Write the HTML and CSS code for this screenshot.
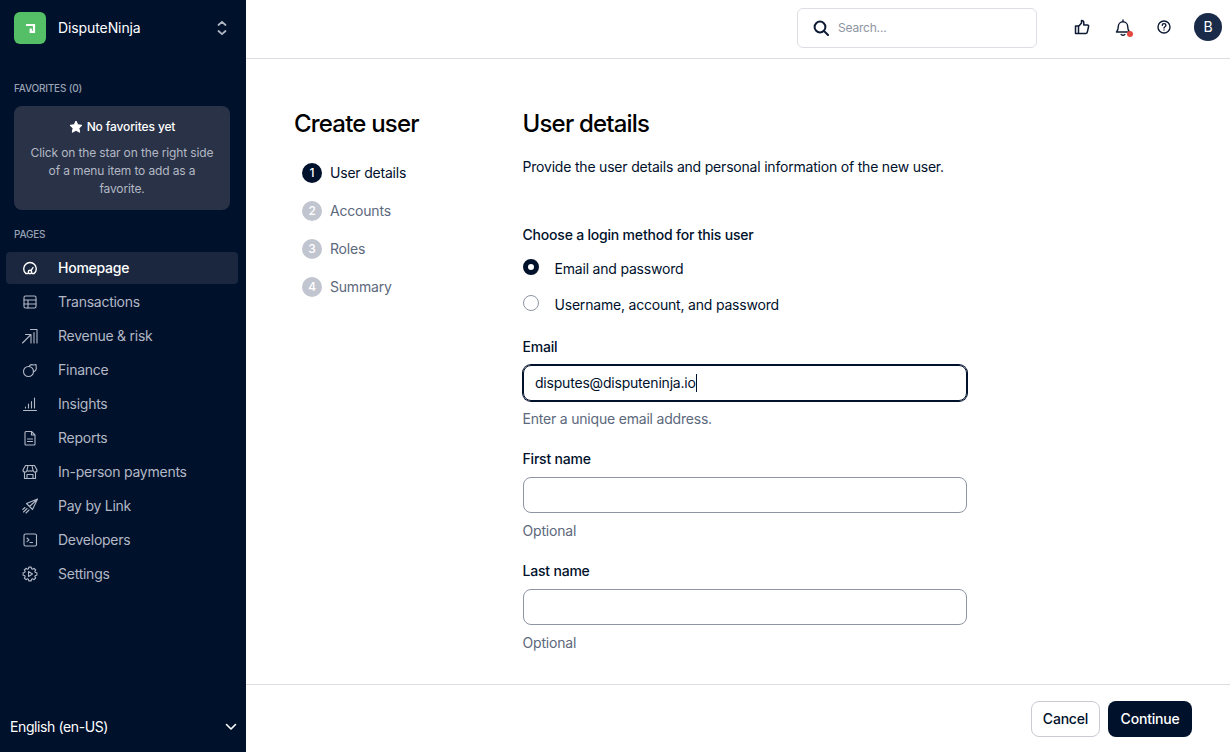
FILE: index.html
```html
<!DOCTYPE html>
<html lang="en">
<head>
  <meta charset="UTF-8">
  <meta name="viewport" content="width=device-width, initial-scale=1.0">
  <title>Create user</title>
  <link rel="stylesheet" href="styles.css">
</head>
<body>
  <aside class="sidebar">
    <div class="brand">
      <div class="brand-logo">
        <svg width="11" height="11" viewBox="0 0 12 12"><path fill="#fff" fill-rule="evenodd" d="M1 1h10v10H5V6h2.500v2.500H8.600V3.400H1z"/></svg>
      </div>
      <span class="brand-name">DisputeNinja</span>
      <svg class="brand-switch" width="12" height="16" viewBox="0 0 12 16" fill="none" stroke="#aeb4c0" stroke-width="1.800" stroke-linecap="round" stroke-linejoin="round"><path d="M2.500 5L6 1.800 9.500 5M2.500 11L6 14.200 9.500 11"/></svg>
    </div>

    <div class="side-label">FAVORITES (0)</div>
    <div class="fav-card">
      <div class="fav-title">
        <svg width="14" height="14" viewBox="0 0 14 14"><path fill="#fff" stroke="#fff" stroke-linejoin="round" d="M7 1l1.800 3.800 4.200.5-3.100 2.900.8 4.100L7 10.300l-3.700 2 .8-4.100L1 5.300l4.200-.5z"/></svg>
        No favorites yet
      </div>
      <p>Click on the star on the right side of a menu item to add as a favorite.</p>
    </div>

    <div class="side-label pages-label">PAGES</div>
    <nav class="side-nav">
      <a class="nav-item active" href="#">
        <svg viewBox="0 0 16 16"><path d="M3.800 13.500A6.300 6.300 0 1 1 12.200 13.500M3.800 13.500H6M10 13.500h2.200"/><circle cx="8" cy="12" r="1.700"/><path d="M9 10.700L11 7.500"/></svg>
        Homepage
      </a>
      <a class="nav-item" href="#">
        <svg viewBox="0 0 16 16"><rect x="2" y="2" width="12" height="12" rx="1.500"/><path d="M2 6h12M2 10h12M6 6v8"/></svg>
        Transactions
      </a>
      <a class="nav-item" href="#">
        <svg viewBox="0 0 16 16"><path d="M.5 15L8.500 7M3.500 6.500h5.500V12M8.500 1.500h6.500v13.500M12 4.500V15M9 10v5"/></svg>
        Revenue &amp; risk
      </a>
      <a class="nav-item" href="#">
        <svg viewBox="0 0 16 16"><circle cx="6.500" cy="9.500" r="5"/><path d="M7 4.500A3.600 3.600 0 0 1 11.500 3l2.500-.5.2 2.600a3.600 3.600 0 0 1-3 4.600"/></svg>
        Finance
      </a>
      <a class="nav-item" href="#">
        <svg viewBox="0 0 16 16"><path d="M1.500 14.500h13M3.500 12v-1M6.500 12V8M9.500 12V5.500M12.500 12V2"/></svg>
        Insights
      </a>
      <a class="nav-item" href="#">
        <svg viewBox="0 0 16 16"><path d="M3 2.500A1 1 0 0 1 4 1.500h5.500L13 5v9a1 1 0 0 1-1 1H4a1 1 0 0 1-1-1zM9.500 1.500V5H13M5.500 9h5M5.500 11.500h5"/></svg>
        Reports
      </a>
      <a class="nav-item" href="#">
        <svg viewBox="0 0 16 16"><path d="M3.500 1.500h9L15 6a2 2 0 0 1-4 .3 2.600 2.600 0 0 1-3 .5 2.600 2.600 0 0 1-3-.5A2 2 0 0 1 1 6zM6 1.500L5 6.300M10 1.500L11 6.300M2.500 8v6.500h11V8M5 14.500V10.500h6v4"/></svg>
        In-person payments
      </a>
      <a class="nav-item" href="#">
        <svg viewBox="0 0 16 16"><path d="M15.500 1L4.500 5.500l3 3 3 3zM15.500 1L7.500 8.500M5 10.500L1.500 14M7 12l-3 3M3 9.500L.8 11.500"/></svg>
        Pay by Link
      </a>
      <a class="nav-item" href="#">
        <svg viewBox="0 0 16 16"><rect x="2" y="2" width="12.500" height="12" rx="1.500"/><path d="M5 6l2 1.800-2 1.800M8 10.500h2.500"/></svg>
        Developers
      </a>
      <a class="nav-item" href="#">
        <svg viewBox="0 0 16 16"><path d="M6.800 1.100H9.200L9.500 2.700 10.670 3.200 12 2.300 13.700 4 12.800 5.330 13.300 6.500 14.900 6.800V9.200L13.300 9.500 12.800 10.670 13.700 12 12 13.700 10.670 12.800 9.500 13.300 9.200 14.900H6.800L6.500 13.300 5.330 12.800 4 13.700 2.300 12 3.200 10.670 2.700 9.500 1.100 9.200V6.800L2.700 6.500 3.200 5.330 2.300 4 4 2.300 5.330 3.200 6.500 2.700z"/><path d="M6.500 5.500l4 2.500-4 2.500z"/></svg>
        Settings
      </a>
    </nav>

    <div class="lang">
      <span>English (en-US)</span>
      <svg width="12" height="8" viewBox="0 0 12 8" fill="none" stroke="#fff" stroke-width="1.600" stroke-linecap="round" stroke-linejoin="round"><path d="M1.500 1.500L6 6l4.500-4.500"/></svg>
    </div>
  </aside>

  <div class="page">
    <header class="topbar">
      <div class="search">
        <svg width="16" height="16" viewBox="0 0 16 16" fill="none" stroke="#0c1a33" stroke-width="2" stroke-linecap="round"><circle cx="7" cy="7" r="5.400"/><path d="M11 11l4 4"/></svg>
        <span>Search...</span>
      </div>
      <div class="top-icons">
        <svg width="16" height="16" viewBox="0 0 16 16" fill="none" stroke="#0c1a33" stroke-width="1.500" stroke-linejoin="round"><path d="M1.500 7h3v7.500h-3zM4.500 7.500L7.500 4V1.500c1.500 0 2.300 1 2.300 2.200V6h3.700c.8 0 1.300.7 1.100 1.500l-1.300 5.700c-.2.800-.8 1.300-1.600 1.300H4.500"/></svg>
        <span class="bell">
          <svg width="16" height="17" viewBox="0 0 16 17" fill="none" stroke="#0c1a33" stroke-width="1.400" stroke-linecap="round" stroke-linejoin="round"><path d="M1.500 13h13c-1.300-1.300-1.800-2.600-1.800-5.500a4.700 4.700 0 0 0-9.400 0c0 2.900-.5 4.200-1.800 5.500zM6.200 15.500c.9.700 2.700.7 3.600 0M8 1v1"/></svg>
          <i class="bell-dot"></i>
        </span>
        <svg width="14" height="14" viewBox="0 0 14 14" fill="none" stroke="#0c1a33" stroke-width="1.400" stroke-linecap="round"><circle cx="7" cy="7" r="6"/><path d="M5.200 5.400C5.300 3 8.900 3.200 8.900 5.300c0 1.400-1.900 1.500-1.900 2.800"/><path d="M7 10v.1"/></svg>
        <div class="avatar">B</div>
      </div>
    </header>

    <main class="content">
      <section class="steps">
        <h1>Create user</h1>
        <ol>
          <li class="current"><span class="num">1</span>User details</li>
          <li><span class="num">2</span>Accounts</li>
          <li><span class="num">3</span>Roles</li>
          <li><span class="num">4</span>Summary</li>
        </ol>
      </section>

      <section class="details">
        <h1>User details</h1>
        <p class="intro">Provide the user details and personal information of the new user.</p>

        <div class="label method-label">Choose a login method for this user</div>
        <div class="radio-row"><span class="radio checked"></span>Email and password</div>
        <div class="radio-row"><span class="radio"></span>Username, account, and password</div>

        <div class="field email-field">
          <div class="label">Email</div>
          <div class="input focused">disputes@disputeninja.io<i class="caret"></i></div>
          <div class="hint">Enter a unique email address.</div>
        </div>
        <div class="field">
          <div class="label">First name</div>
          <div class="input"></div>
          <div class="hint">Optional</div>
        </div>
        <div class="field">
          <div class="label">Last name</div>
          <div class="input"></div>
          <div class="hint">Optional</div>
        </div>
      </section>
    </main>

    <footer class="actions">
      <button class="btn">Cancel</button>
      <button class="btn primary">Continue</button>
    </footer>
  </div>
</body>
</html>
```

FILE: styles.css
```css
/* General */
* {
  box-sizing: border-box;
}

html, body {
  height: 100%;
}

body {
  margin: 0;
  display: flex;
  height: 752px;
  overflow: hidden;
  font-family: "Inter", "Noto Sans", sans-serif;
  font-size: 14px;
  line-height: 20px;
  letter-spacing: -0.2px;
  color: #00112c;
  background-color: #fff;
}

/* Sidebar */
.sidebar {
  width: 246px;
  flex-shrink: 0;
  display: flex;
  flex-direction: column;
  background-color: #00112c;
  color: #fff;
}

.brand {
  display: flex;
  align-items: center;
  height: 56px;
  padding: 0 18px 0 14px;
}

.brand-logo {
  width: 32px;
  height: 32px;
  margin-right: 12px;
  display: flex;
  align-items: center;
  justify-content: center;
  border-radius: 6px;
  background-color: #54bf66;
}

.brand-name {
  flex: 1;
  letter-spacing: -0.1px;
}

.side-label {
  margin: 24px 14px 8px;
  font-size: 10px;
  line-height: 16px;
  font-weight: 500;
  color: #99a2b3;
}

.fav-card {
  margin: 2px 16px 0 14px;
  height: 104px;
  padding: 12px 14px;
  border-radius: 8px;
  background-color: #293247;
  text-align: center;
  font-size: 12px;
  line-height: 18px;
  letter-spacing: -0.13px;
}

.fav-title {
  display: flex;
  align-items: center;
  justify-content: center;
  gap: 4px;
  font-weight: 500;
}

.fav-card p {
  margin: 8px 0 0;
  color: #b3b8c4;
}

.pages-label {
  margin-top: 16px;
  margin-bottom: 0;
}

.side-nav {
  display: flex;
  flex-direction: column;
  gap: 2px;
  margin: 10px 8px 0 6px;
  letter-spacing: -0.25px;
}

.nav-item {
  display: flex;
  align-items: center;
  height: 32px;
  padding-left: 16px;
  border-radius: 4px;
  color: #b3b8c4;
  text-decoration: none;
}

.nav-item svg {
  width: 16px;
  height: 16px;
  margin-right: 20px;
  fill: none;
  stroke: #b3b8c4;
  stroke-width: 1.100;
  stroke-linecap: round;
  stroke-linejoin: round;
}

.nav-item.active {
  background-color: #1a273f;
  color: #fff;
  font-weight: 500;
}

.nav-item.active svg {
  stroke: #fff;
  stroke-width: 1.400;
}

.lang {
  margin-top: auto;
  height: 50px;
  padding: 0 9px 0 10px;
  display: flex;
  align-items: center;
  justify-content: space-between;
  letter-spacing: -0.4px;
}

/* Top bar */
.page {
  flex: 1;
  display: flex;
  flex-direction: column;
  min-width: 0;
}

.topbar {
  height: 59px;
  flex-shrink: 0;
  display: flex;
  align-items: center;
  padding: 0 8px 4px 551px;
  border-bottom: 1px solid #dbdee2;
}

.search {
  width: 240px;
  height: 40px;
  flex-shrink: 0;
  margin-top: 2px;
  padding: 0 15px;
  display: flex;
  align-items: center;
  gap: 9px;
  border: 1px solid #dbdee2;
  border-radius: 6px;
  font-size: 12px;
  color: #8d95a3;
}

.top-icons {
  display: flex;
  align-items: center;
  margin-left: 37px;
}

.top-icons > svg:first-child {
  margin-right: 25px;
}

.bell {
  position: relative;
  display: flex;
  margin-right: 26px;
}

.bell-dot {
  position: absolute;
  right: -2px;
  bottom: -1px;
  width: 6px;
  height: 6px;
  border-radius: 50%;
  background-color: #e5483e;
}

.avatar {
  width: 28px;
  height: 28px;
  margin-left: 23px;
  display: flex;
  align-items: center;
  justify-content: center;
  border-radius: 50%;
  background-color: #1a2b49;
  color: #fff;
  font-size: 14px;
}

/* Content */
.content {
  flex: 1;
  display: flex;
  padding: 50px 0 0 48px;
  overflow: hidden;
}

.steps {
  width: 228.500px;
}

h1 {
  margin: 0;
  font-size: 24px;
  line-height: 30px;
  font-weight: 500;
  letter-spacing: -0.8px;
  color: #000;
}

.steps ol {
  list-style: none;
  margin: 24px 0 0 8px;
  padding: 0;
  display: flex;
  flex-direction: column;
  gap: 18px;
  color: #5c687c;
}

.steps li {
  display: flex;
  align-items: center;
  height: 20px;
}

.num {
  width: 20px;
  height: 20px;
  margin-right: 8px;
  display: flex;
  align-items: center;
  justify-content: center;
  border-radius: 50%;
  background-color: #c1c5cf;
  color: #fff;
  font-size: 12px;
  font-weight: 500;
}

.steps li.current {
  color: #00112c;
}

.current .num {
  background-color: #00112c;
}

.details {
  width: 444.500px;
}

.intro {
  margin: 18px 0 0;
}

.label {
  font-weight: 500;
}

.method-label {
  margin-top: 48px;
}

.radio-row {
  display: flex;
  align-items: center;
  height: 20px;
  margin-top: 14px;
}

.radio-row + .radio-row {
  margin-top: 16px;
}

.radio {
  width: 16px;
  height: 16px;
  margin-right: 16px;
  margin-top: -4px;
  border: 1px solid #8d95a3;
  border-radius: 50%;
}

.radio.checked {
  border: 5px solid #00112c;
}

.field {
  margin-top: 20px;
}

.email-field {
  margin-top: 22px;
}

.input {
  height: 36px;
  margin-top: 8px;
  padding: 0 12px;
  display: flex;
  align-items: center;
  border: 1px solid #8d95a3;
  border-radius: 8px;
}

.input.focused {
  border-color: #00112c;
  box-shadow: 0 0 0 1px #00112c;
  padding-left: 11.500px;
}

.caret {
  width: 1px;
  height: 18px;
  background-color: #00112c;
}

.hint {
  margin-top: 8px;
  color: #5c687c;
}

/* Footer */
.actions {
  height: 68px;
  flex-shrink: 0;
  display: flex;
  justify-content: flex-end;
  align-items: center;
  gap: 8px;
  padding: 0 38px 0 0;
  border-top: 1px solid #dbdee2;
}

.btn {
  height: 36px;
  padding: 0 11px;
  border: 1px solid #c9ccd3;
  border-radius: 8px;
  background-color: #fff;
  color: #00112c;
  font-family: inherit;
  font-size: 14px;
  font-weight: 500;
  letter-spacing: inherit;
}

.btn.primary {
  padding: 0 12.500px;
  border: none;
  background-color: #00112c;
  color: #fff;
}
```
